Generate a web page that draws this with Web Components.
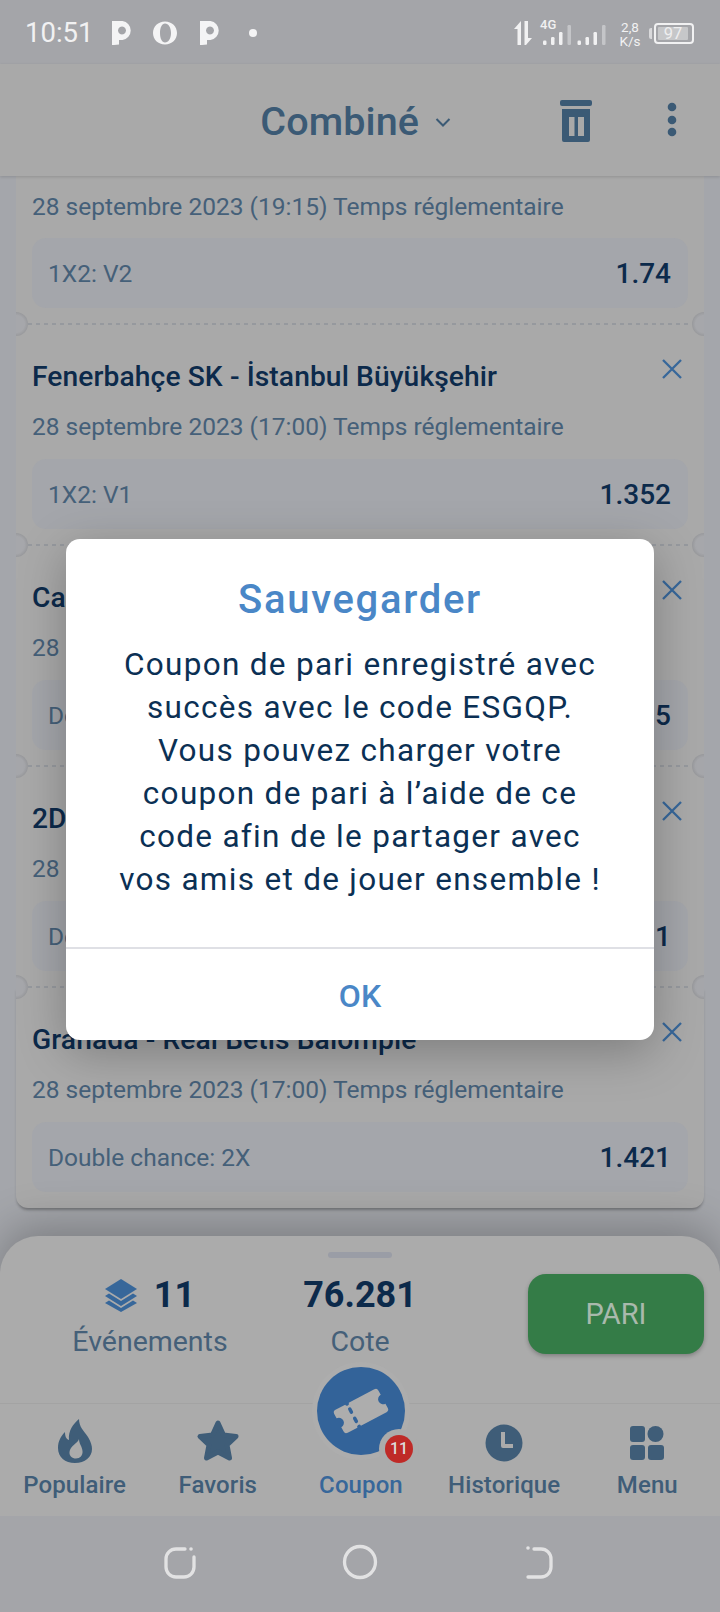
<!DOCTYPE html>
<html lang="fr">
<head>
<meta charset="utf-8">
<title>Combiné</title>
<style>
html,body{margin:0;padding:0;background:#a4a6ab;}
body{font-family:Roboto,"Liberation Sans",sans-serif;width:720px;height:1612px;overflow:hidden;}
</style>
</head>
<body>
<app-shell>
  <status-bar slot="top"></status-bar>
  <app-header slot="top" title-text="Combiné"></app-header>
  <bet-segment first date="28 septembre 2023 (19:15) Temps réglementaire" market="1X2: V2" odds="1.74"></bet-segment>
  <bet-segment title-text="Fenerbahçe SK - İstanbul Büyükşehir" date="28 septembre 2023 (17:00) Temps réglementaire" market="1X2: V1" odds="1.352"></bet-segment>
  <bet-segment title-text="Ca" date="28" market="Do" odds="1.5"></bet-segment>
  <bet-segment title-text="2D" date="28" market="Do" odds="1.1"></bet-segment>
  <bet-segment last title-text="Granada - Real Betis Balompié" date="28 septembre 2023 (17:00) Temps réglementaire" market="Double chance: 2X" odds="1.421"></bet-segment>
  <bet-sheet slot="bottom"></bet-sheet>
  <bottom-nav slot="bottom"></bottom-nav>
  <system-nav slot="bottom"></system-nav>
  <save-dialog slot="overlay" heading="Sauvegarder" action="OK">Coupon de pari enregistré avec<br>succès avec le code ESGQP.<br>Vous pouvez charger votre<br>coupon de pari à l’aide de ce<br>code afin de le partager avec<br>vos amis et de jouer ensemble !</save-dialog>
</app-shell>

<script>
function def(name, html){
  customElements.define(name, class extends HTMLElement{
    constructor(){
      super();
      const r=this.attachShadow({mode:'open'});
      r.innerHTML=typeof html==='function'?html(this):html;
    }
  });
}

def('app-shell',`<style>
:host{display:flex;flex-direction:column;position:relative;width:720px;height:1612px;overflow:hidden;background:#a4a6ab;}
.list{flex:1;min-height:0;padding:0 16px;overflow:hidden;display:flex;flex-direction:column;}
.top{position:relative;z-index:3;display:block;}
.bottom{position:relative;z-index:2;display:block;}
</style>
<div class="top"><slot name="top"></slot></div>
<div class="list"><slot></slot></div>
<div class="bottom"><slot name="bottom"></slot></div>
<slot name="overlay"></slot>`);

def('status-bar',`<style>
:host{display:flex;align-items:center;height:64px;background:#a4a5a9;color:#f1f1f2;box-sizing:border-box;padding:2px 26px 0 25px;}
.time{font-size:27.5px;line-height:32px;width:87px;margin-top:-1px}
svg{display:block;flex:none}
.apps{width:150px;height:30px}
.sp{flex:1}
.net{width:92px;height:30px;margin-right:14px}
.speed{display:flex;flex-direction:column;align-items:center;font-size:13.5px;line-height:14px;width:20px;margin:2px 9px 0 0}
.body{position:relative;width:40px;height:21px;box-sizing:border-box;border:2px solid #f1f1f2;border-radius:4px;padding:2px;display:flex}
.batt{position:relative;width:45px;height:21px;display:flex;justify-content:flex-end;margin-top:1px;}
.fill{flex:1;background:#c6c7c9;border-radius:1px;margin-right:2px;display:flex;align-items:center;justify-content:center;font-size:16.5px;line-height:13px;color:#eeeeef}
.tip{position:absolute;left:0;top:5px;width:3px;height:11px;background:#d9d9db;border-radius:2px 0 0 2px}
</style>
<div class="time">10:51</div>
<svg class="apps" viewBox="0 0 150 30" fill="#f4f4f5">
  <path fill-rule="evenodd" d="M0 3h10.5a9.6 9.6 0 0 1 0 19H7V26.5L2 27H0Z M10 8.6a4 4 0 1 0 .01 0Z"/>
  <path fill-rule="evenodd" d="M53 3.5c7 0 12 5 12 11.500s-5 11.500-12 11.500-12-5-12-11.500 5-11.500 12-11.500Z M53 5.500c-3 0-5 4-5 9.500s2 9.500 5 9.500c3.500 0 6-4 6-9.500s-2.500-9.500-6-9.500Z"/>
  <path fill-rule="evenodd" d="M88 3h10.500a9.600 9.600 0 0 1 0 19H95V26.500L90 27H88Z M98 8.600a4 4 0 1 0 .01 0Z"/>
  <circle cx="141" cy="15" r="4"/>
</svg>
<div class="sp"></div>
<svg class="net" viewBox="0 0 92 30" fill="#f1f1f2">
  <path d="M0 11 7 3V27H3.500V11Z M10.500 3H14V20L18 20 12 27H10.500Z"/>
  <text x="26" y="11" font-family="Roboto,sans-serif" font-size="13" font-weight="500" fill="#f1f1f2">4G</text>
  <rect x="29" y="22.500" width="3.500" height="4.500" rx="1.200"/><rect x="37" y="19" width="3.500" height="8" rx="1.200"/><rect x="45" y="14" width="3.500" height="13" rx="1.200"/><rect x="53.500" y="7" width="3.500" height="20" rx="1.200" fill="#c4c5c8"/>
  <rect x="63.500" y="22.500" width="3.500" height="4.500" rx="1.200"/><rect x="71.500" y="19" width="3.500" height="8" rx="1.200"/><rect x="79.500" y="14" width="3.500" height="13" rx="1.200"/><rect x="88" y="7" width="3.500" height="20" rx="1.200" fill="#c4c5c8"/>
</svg>
<div class="speed"><span>2,8</span><span>K/s</span></div>
<div class="batt"><span class="tip"></span><div class="body"><div class="fill">97</div></div></div>`);

def('app-header',`<style>
:host{display:block;height:112px;background:#a9a9a9;box-shadow:0 1px 3px rgba(0,0,0,.14);box-sizing:border-box;}
.bar{display:flex;height:112px;align-items:center}
.t{width:453px;display:flex;align-items:center;justify-content:flex-end;gap:14px;color:#3b5a75;padding-top:3px;box-sizing:border-box}
h1{margin:0;font-size:39.5px;font-weight:500;line-height:46px;letter-spacing:.1px}
svg{display:block;flex:none}
.trash{margin:2px 0 0 107px}
.kebab{margin-left:75px}
</style>
<div class="bar">
  <div class="t"><h1>Combiné</h1><svg width="20" height="20" viewBox="0 0 20 20" fill="none" stroke="#3b5a75" stroke-width="2"><path d="M3.500 7 10 13.500 16.500 7"/></svg></div>
  <svg class="trash" width="32" height="42" viewBox="0 0 32 42"><rect x="0" y="0" width="32" height="6" rx="2" fill="#3b5a75"/><path fill="#3b5a75" fill-rule="evenodd" d="M2 9H30V40a2 2 0 0 1-2 2H4a2 2 0 0 1-2-2V9Z M9 17V36H14.500V17Z M18 17V36H24V17Z"/></svg>
  <svg class="kebab" width="10" height="36" viewBox="0 0 10 36" fill="#3b5a75"><circle cx="5" cy="5" r="4.300"/><circle cx="5" cy="18" r="4.300"/><circle cx="5" cy="30" r="4.300"/></svg>
</div>`);

def('bet-segment',(h)=>{
  const first=h.hasAttribute('first'), last=h.hasAttribute('last');
  const t=h.getAttribute('title-text')||'';
  return `<style>
:host{display:block;position:relative;flex:none;background:#a9a9a9;box-sizing:border-box;padding:${first?'16px':'36px'} 16px 16px;color:#0c2a4b;${last?'border-radius:0 0 12px 12px;box-shadow:0 3px 3px -1px rgba(0,0,0,.3);':''}}
.sep{position:absolute;left:12px;right:12px;top:-1px;height:2px;background:repeating-linear-gradient(90deg,#96999e 0 4px,transparent 4px 8px);}
.notch{position:absolute;top:-12px;width:12px;height:24px;}
.l{left:0;border-radius:0 12px 12px 0;background:radial-gradient(circle at 0 50%,#a6a7ab 0 8.5px,#98999c 12px)}
.r{right:0;border-radius:12px 0 0 12px;background:radial-gradient(circle at 100% 50%,#a6a7ab 0 8.5px,#98999c 12px)}
.title{font-size:28.2px;font-weight:500;line-height:34px;margin-bottom:18px;letter-spacing:.1px;white-space:nowrap}
.date{font-size:24.5px;line-height:30px;color:#456079;margin-bottom:${first?'16px':'17px'};white-space:nowrap}
.box{height:70px;border-radius:14px;background:#a4a6ab;display:flex;align-items:center;justify-content:space-between;padding:0 17px 0 16px;box-sizing:border-box}
.m{font-size:24.5px;color:#456079}
.o{font-size:28px;font-weight:500;color:#0c2a4b}
.x{position:absolute;right:21px;top:34px;display:block}
</style>
${first?'':`<div class="sep"></div><span class="notch l"></span><span class="notch r"></span>
<svg class="x" width="22" height="22" viewBox="0 0 22 22" fill="none" stroke="#37679a" stroke-width="2.300"><path d="M2 2 20 20M20 2 2 20"/></svg>
<div class="title">${t}</div>`}
<div class="date">${h.getAttribute('date')}</div>
<div class="box"><span class="m">${h.getAttribute('market')}</span><span class="o">${h.getAttribute('odds')}</span></div>`;
});

def('bet-sheet',`<style>
:host{display:block;position:relative;height:167px;background:#ababab;border-radius:38px 38px 0 0;box-shadow:0 -10px 44px rgba(0,0,0,.25);box-sizing:border-box;padding:16px 16px 0}
.h{width:64px;height:6px;border-radius:3px;background:#9a9da6;margin:0 auto 16px}
.g{display:grid;grid-template-columns:268px 152px 1fr 176px;}
.c{display:flex;flex-direction:column;align-items:center;padding-top:1px}
.n{display:flex;align-items:center;gap:17px;font-size:36px;font-weight:700;line-height:40px;color:#0c2a4b}
.l{font-size:28.5px;line-height:34px;color:#456079;margin-top:10px}
.b{grid-column:4;height:80px;border-radius:18px;background:#347c47;color:#a9b9ac;font-size:29px;display:flex;align-items:center;justify-content:center;box-shadow:0 2px 4px rgba(0,0,0,.25)}
svg{display:block}
</style>
<div class="h"></div>
<div class="g">
  <div class="c"><div class="n"><svg width="32" height="33" viewBox="0 0 32 33" fill="#37679a"><path d="M16 0 32 10 16 20 0 10Z"/><path d="M4 14.500 16 22 28 14.500 32 17 16 27 0 17Z"/><path d="M4 21.500 16 29 28 21.500 32 24 16 33 0 24Z"/></svg><span>11</span></div><div class="l">Événements</div></div>
  <div class="c"><div class="n">76.281</div><div class="l">Cote</div></div>
  <div class="b">PARI</div>
</div>`);

def('nav-item',(h)=>`<style>
:host{display:flex;flex-direction:column;align-items:center;padding-top:15px;color:#3f5d78;font-size:24px;font-weight:500;line-height:30px;letter-spacing:.1px}
:host([active]){color:#37679a}
.i{height:44px;margin-bottom:7px;display:flex;align-items:center;justify-content:center}
</style>
<div class="i"><slot name="icon"></slot></div><div>${h.getAttribute('label')}</div>`);

def('bottom-nav',`<style>
:host{display:block;position:relative;height:113px;background:#ababab;border-top:1px solid #a3a3a3;box-sizing:border-box}
.g{display:grid;grid-template-columns:repeat(5,143.2px);padding-left:3px}
.fab{position:absolute;left:312px;top:-42px;width:98px;height:98px;border-radius:50%;background:#adadad;display:flex;align-items:center;justify-content:center}
.fab i{display:flex;width:88px;height:88px;border-radius:50%;background:#336399;align-items:center;justify-content:center}
.badge{position:absolute;left:67px;top:67px;width:40px;height:40px;border-radius:50%;background:#ababab;display:flex;align-items:center;justify-content:center}
.badge b{display:block;width:28px;height:28px;border-radius:50%;background:#bf2a27;color:#dcdcdc;font-size:16px;font-weight:500;line-height:28px;text-align:center}
svg{display:block}
</style>
<div class="g">
  <nav-item label="Populaire"><svg slot="icon" width="34" height="44" viewBox="0 0 34 44"><path fill="#3f5d78" fill-rule="evenodd" d="M21 0C21 8 26 12 30 18C33 23 34 27 34 30C34 38 27 44 17 44C7 44 0 38 0 29C0 22 3 17 7 13C7 17 8 20 11 21C10 12 15 5 21 0Z M21 20C20 24 12 27 11.500 33C11.200 37 14 39.500 18 39.500C22 39.500 25 36.500 24.500 32C24 27 21 25 21 20Z"/></svg></nav-item>
  <nav-item label="Favoris"><svg slot="icon" width="44" height="44" viewBox="0 0 44 44"><path fill="#3f5d78" stroke="#3f5d78" stroke-width="5" stroke-linejoin="round" d="M22 4 27.500 16 40 17.500 31 26 33.500 39 22 33 10.500 39 13 26 4 17.500 16.500 16Z"/></svg></nav-item>
  <nav-item active label="Coupon"><span slot="icon" style="display:block;height:44px;width:10px"></span></nav-item>
  <nav-item label="Historique"><svg slot="icon" width="40" height="44" viewBox="0 0 40 44"><circle cx="20" cy="24" r="18.500" fill="#3f5d78"/><path d="M19 13V27H29" fill="none" stroke="#ababab" stroke-width="4" stroke-linejoin="round"/></svg></nav-item>
  <nav-item label="Menu"><svg slot="icon" width="36" height="44" viewBox="0 0 36 44" fill="#3f5d78"><rect x="1" y="7" width="15" height="16" rx="3"/><ellipse cx="26.500" cy="15" rx="8" ry="8"/><rect x="1" y="26" width="15" height="15" rx="3"/><rect x="19" y="26" width="16" height="15" rx="3"/></svg></nav-item>
</div>
<div class="fab"><i><svg width="62" height="62" viewBox="-31 -31 62 62"><g transform="rotate(-28)"><path fill="#adadad" d="M-22 -13H-11a2 2 0 0 0 4 0H22a3 3 0 0 1 3 3V-5a5 5 0 0 0 0 10V10a3 3 0 0 1-3 3H-7a2 2 0 0 0-4 0H-22a3 3 0 0 1-3-3V5a5 5 0 0 0 0-10V-10a3 3 0 0 1 3-3Z"/><path stroke="#336399" stroke-width="3.500" stroke-linecap="round" fill="none" d="M-9 -7V-3.500M-9 3.500V7"/></g></svg></i>
<span class="badge"><b>11</b></span></div>`);

def('system-nav',`<style>
:host{display:flex;height:96px;background:#a4a5a9;align-items:center;justify-content:center;box-sizing:border-box;padding-bottom:4px}
svg{display:block;position:relative}
</style>
<svg width="720" height="40" viewBox="0 0 720 40" fill="none" stroke="#e2e2e3" stroke-width="3.300" stroke-linecap="round">
  <path d="M185 7H176a10 10 0 0 0-10 10V25a10 10 0 0 0 10 10H184a10 10 0 0 0 10-10V15"/><circle cx="191" cy="7" r="1.800" fill="#e2e2e3" stroke="none"/>
  <ellipse cx="360" cy="20" rx="15.500" ry="15.500"/>
  <path d="M534 7H541a10 10 0 0 1 10 10V25a10 10 0 0 1-10 10H528"/><circle cx="528" cy="6" r="1.800" fill="#e2e2e3" stroke="none"/>
</svg>`);

def('save-dialog',(h)=>`<style>
:host{display:flex;flex-direction:column;position:absolute;z-index:5;left:66px;top:539px;width:588px;height:501px;background:#fff;border-radius:14px;box-shadow:0 12px 48px rgba(0,0,0,.26);box-sizing:border-box;text-align:center}
h2{margin:37px 0 0;font-size:40px;line-height:48px;font-weight:500;color:#4a87c7;letter-spacing:1.7px}
.m{margin:19px 0 0;font-size:31.5px;line-height:43px;color:#0b3054;letter-spacing:1.3px;flex:1;white-space:nowrap}
.a{border-top:2px solid #dfe0e5;height:93px;display:flex;align-items:center;justify-content:center;font-size:32px;font-weight:500;color:#4a87c7;padding-top:3px;box-sizing:border-box}
</style>
<h2>${h.getAttribute('heading')}</h2>
<div class="m"><slot></slot></div>
<div class="a">${h.getAttribute('action')}</div>`);
</script>
</body>
</html>
